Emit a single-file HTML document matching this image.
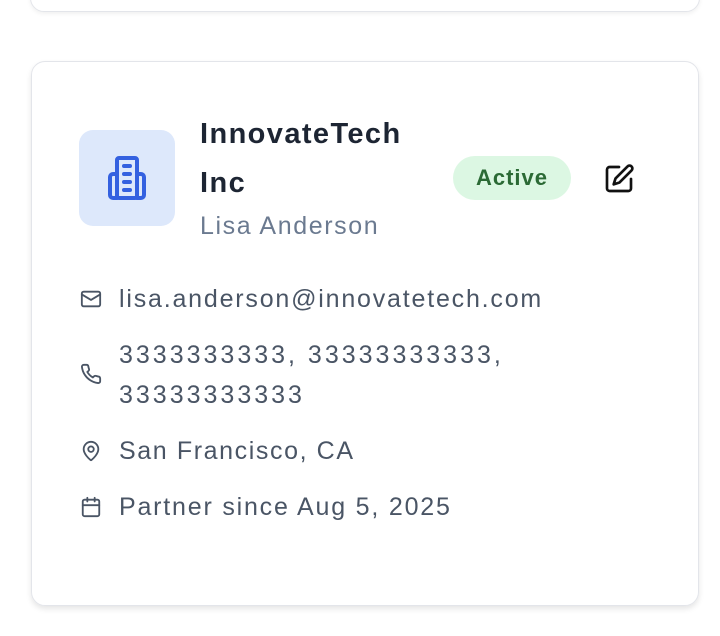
<!DOCTYPE html>
<html><head><style>
body{margin:0;width:720px;height:636px;background:#fff;font-family:"Liberation Sans",sans-serif;position:relative;overflow:hidden}
.top{position:absolute;left:30px;top:-20px;width:668px;height:30px;border:1.5px solid #e3e5ea;border-radius:14px;box-shadow:0 2px 4px rgba(0,0,0,.06)}
.card{position:absolute;left:31px;top:61px;width:666px;height:543px;border:1.5px solid #e3e5ea;border-radius:14px;box-shadow:0 3px 6px rgba(0,0,0,.1)}
.ib{position:absolute;left:79px;top:130px;width:96px;height:96px;background:#dde8fb;border-radius:14px}
.t{position:absolute;left:200px;font-weight:bold;font-size:29px;letter-spacing:1.4px;color:#1d2533}
.sub{position:absolute;left:200px;top:212px;font-size:25px;letter-spacing:1.6px;color:#6b7a90}
.badge{position:absolute;left:453px;top:156px;width:118px;height:44px;border-radius:22px;background:#dcf7e3;color:#2b6a35;font-weight:bold;font-size:22px;letter-spacing:1px;text-align:center;line-height:44px}
.row{position:absolute;left:119px;font-size:25px;letter-spacing:1.8px;color:#4a5565;line-height:40px}
.ic{position:absolute;left:80px}
</style></head><body>
<div class="top"></div>
<div class="card"></div>
<div class="ib"></div>
<svg style="position:absolute;left:103px;top:154px" width="48" height="48" viewBox="0 0 24 24" fill="none" stroke="#3461e0" stroke-width="2" stroke-linecap="round" stroke-linejoin="round"><rect x="7" y="2" width="10" height="20" rx="1"/><path d="M7 10H5a1.5 1.5 0 0 0-1.5 1.5v9A1.5 1.5 0 0 0 5 22h2M17 10h2a1.5 1.5 0 0 1 1.5 1.5v9A1.5 1.5 0 0 1 19 22h-2M10.5 6h3M10.5 10h3M10.5 14h3M10.5 18h3"/></svg>
<div class="t" style="top:118px">InnovateTech</div>
<div class="t" style="top:167px">Inc</div>
<div class="sub">Lisa Anderson</div>
<div class="badge">Active</div>
<svg style="position:absolute;left:603px;top:163px" width="32" height="32" viewBox="0 0 24 24" fill="none" stroke="#111" stroke-width="2" stroke-linecap="round" stroke-linejoin="round"><path d="M12 3H5a2 2 0 0 0-2 2v14a2 2 0 0 0 2 2h14a2 2 0 0 0 2-2v-7"/><path d="M18.4 2.6a2.1 2.1 0 0 1 3 3L12.4 14.6 8 16l1.4-4.4z"/></svg>

<svg class="ic" style="top:288px" width="22" height="22" viewBox="0 0 24 24" fill="none" stroke="#4a5565" stroke-width="2" stroke-linecap="round" stroke-linejoin="round"><rect x="2" y="4" width="20" height="16" rx="2"/><path d="m22 7-10 6L2 7"/></svg>
<div class="row" style="top:279px">lisa.anderson@innovatetech.com</div>
<svg class="ic" style="top:363px" width="22" height="22" viewBox="0 0 24 24" fill="none" stroke="#4a5565" stroke-width="2" stroke-linecap="round" stroke-linejoin="round"><path d="M22 16.9v3a2 2 0 0 1-2.2 2 19.8 19.8 0 0 1-8.6-3.1 19.5 19.5 0 0 1-6-6A19.8 19.8 0 0 1 2.1 4.2 2 2 0 0 1 4.1 2h3a2 2 0 0 1 2 1.7c.1 1 .4 1.9.7 2.8a2 2 0 0 1-.5 2.1L8 9.8a16 16 0 0 0 6 6l1.3-1.3a2 2 0 0 1 2.1-.4c.9.3 1.8.6 2.8.7a2 2 0 0 1 1.7 2z"/></svg>
<div class="row" style="top:335px;letter-spacing:3px">3333333333, 33333333333,<br>33333333333</div>
<svg class="ic" style="top:440px" width="22" height="22" viewBox="0 0 24 24" fill="none" stroke="#4a5565" stroke-width="2" stroke-linecap="round" stroke-linejoin="round"><path d="M20 10c0 5-5.5 10.2-7.4 11.8a1 1 0 0 1-1.2 0C9.5 20.2 4 15 4 10a8 8 0 0 1 16 0"/><circle cx="12" cy="10" r="3"/></svg>
<div class="row" style="top:431px;letter-spacing:1.6px">San Francisco, CA</div>
<svg class="ic" style="top:496px" width="22" height="22" viewBox="0 0 24 24" fill="none" stroke="#4a5565" stroke-width="2" stroke-linecap="round" stroke-linejoin="round"><rect x="3" y="4" width="18" height="18" rx="2"/><path d="M16 2v4M8 2v4M3 10h18"/></svg>
<div class="row" style="top:487px">Partner since Aug 5, 2025</div>
</body></html>
